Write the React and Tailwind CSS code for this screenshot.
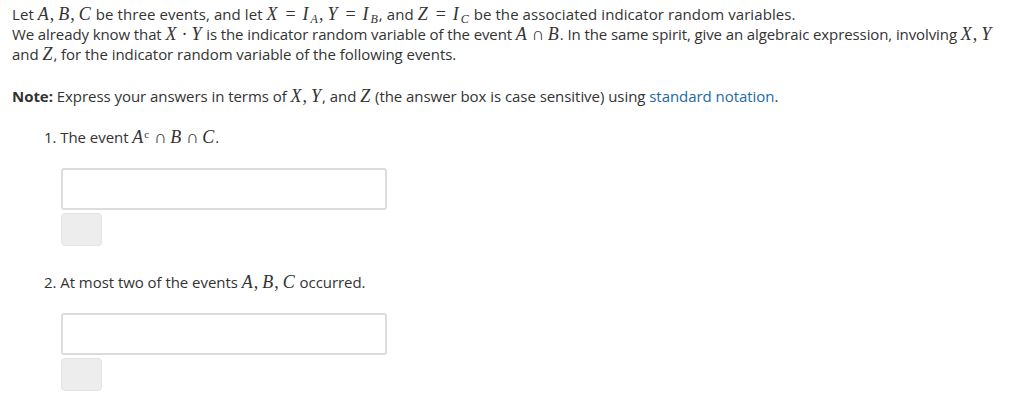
import React from 'react';

// inline math in a TeX-like serif, spaced roughly like KaTeX
const M = ({ children }) => (
  <span className="font-['Liberation_Serif',serif] italic text-[18px] leading-none tracking-[1px]">{children}</span>
);

const Rel = ({ children }) => (
  <span className="not-italic inline-block w-[14px] text-center mx-[5px] tracking-normal">{children}</span>
);
const Bin = ({ children }) => (
  <span className="not-italic inline-block w-[12px] text-center mx-[4px] tracking-normal">{children}</span>
);
const Dot = () => (
  <span className="not-italic inline-block w-[6px] text-center mx-[4px] tracking-normal">·</span>
);
const Comma = () => <span className="not-italic mr-[3px]">,</span>;

const Sub = ({ children }) => (
  <span className="inline-block text-[12px] leading-none translate-y-[3px] ml-[1px] mr-[1px] tracking-normal">{children}</span>
);

const AnswerBox = () => (
  <div className="flex flex-col gap-[3px] ml-[49px] mt-[21px]">
    <input
      type="text"
      className="w-[326px] h-[42px] border-2 border-[#dcdcdc] rounded-[3px] bg-white outline-none"
    />
    <button className="w-[41px] h-[33px] rounded-[4px] bg-[#ededed] border border-[#e3e3e3]" />
  </div>
);

const App = () => {
  return (
    <div className="w-[1024px] h-[407px] bg-white overflow-hidden pl-[12px] pt-[4px] font-['Open_Sans',sans-serif] text-[15px] leading-[20px] tracking-[-0.05px] text-[#333]">
      <p className="whitespace-nowrap tracking-[0.08px]">
        Let <M>A<Comma />B<Comma />C</M> be three events, and let <M>X<Rel>=</Rel>I<Sub>A</Sub><Comma />Y<Rel>=</Rel>I<Sub>B</Sub></M>, and <M>Z<Rel>=</Rel>I<Sub>C</Sub></M> be the associated indicator random variables.
      </p>
      <p className="whitespace-nowrap tracking-[-0.1px]">
        We already know that <M>X<Dot />Y</M> is the indicator random variable of the event <M>A<Bin>∩</Bin>B</M>. In the same spirit, give an algebraic expression, involving <M>X<Comma />Y</M>
      </p>
      <p className="whitespace-nowrap">
        and <M>Z</M>, for the indicator random variable of the following events.
      </p>

      <p className="whitespace-nowrap mt-[22px]">
        <span className="font-bold">Note:</span> Express your answers in terms of <M>X<Comma />Y</M>, and <M>Z</M> (the answer box is case sensitive) using{' '}
        <a className="text-[#1a6aa5]">standard notation</a>.
      </p>

      <ol className="mt-[21px]">
        <li className="ml-[32px] whitespace-nowrap">
          1. The event <M>A<sup className="text-[11px] not-italic">c</sup><Bin>∩</Bin>B<Bin>∩</Bin>C</M>.
        </li>
      </ol>
      <AnswerBox />

      <ol className="mt-[26px]">
        <li className="ml-[32px] whitespace-nowrap">
          2. At most two of the events <M>A<Comma />B<Comma />C</M> occurred.
        </li>
      </ol>
      <AnswerBox />
    </div>
  );
};

export default App;
